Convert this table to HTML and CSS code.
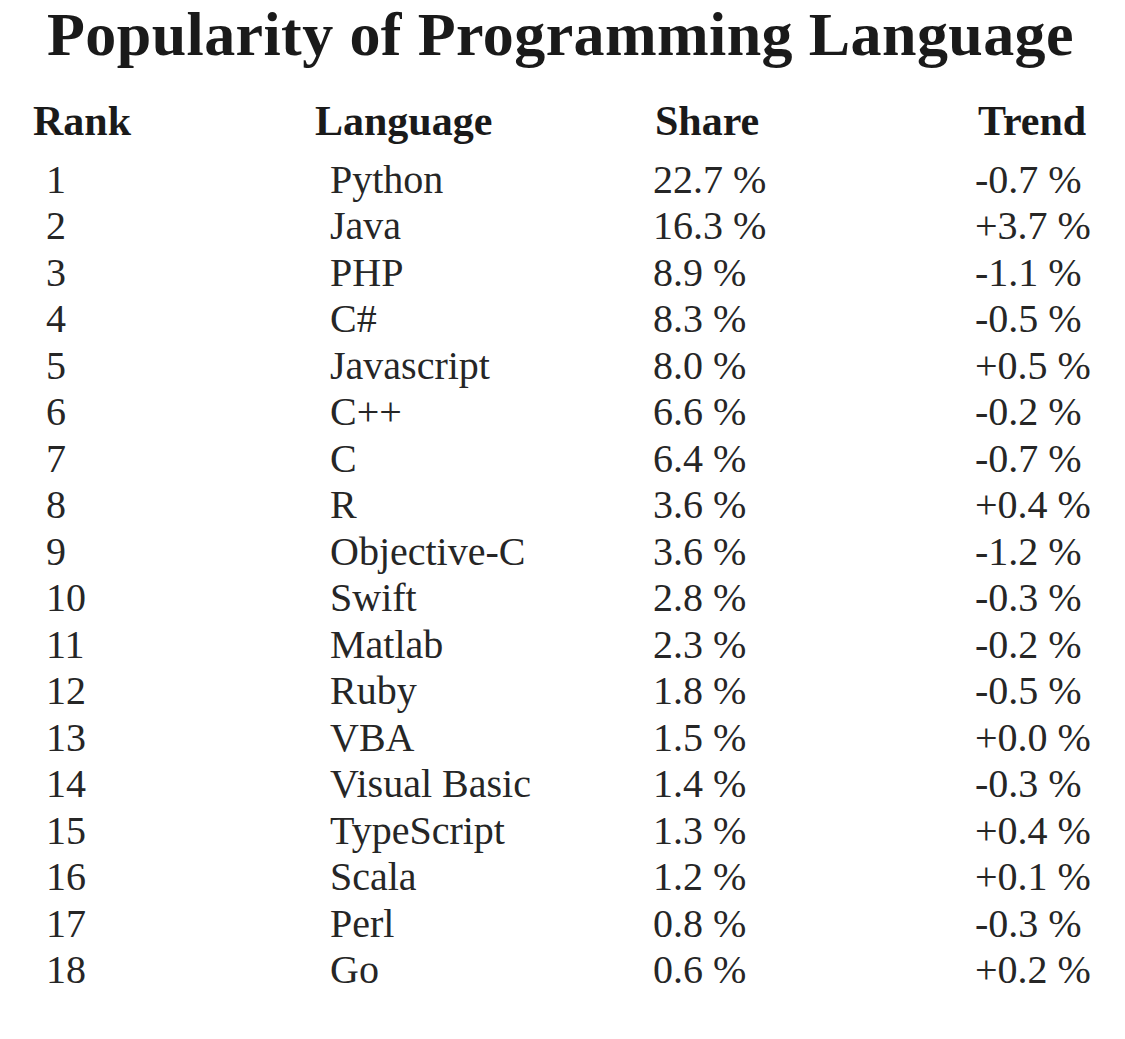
FILE: index.html
```html
<!DOCTYPE html>
<html lang="en">
<head>
<meta charset="utf-8">
<title>Popularity of Programming Language</title>
<link rel="stylesheet" href="styles.css">
</head>
<body>
<main class="page">
  <h1 class="title">Popularity of Programming Language</h1>
  <div class="table">
    <div class="head rank">Rank</div>
    <div class="head lang">Language</div>
    <div class="head share">Share</div>
    <div class="head trend">Trend</div>

    <div class="cell rank">1</div><div class="cell lang">Python</div><div class="cell share">22.7 %</div><div class="cell trend">-0.7 %</div>
    <div class="cell rank">2</div><div class="cell lang">Java</div><div class="cell share">16.3 %</div><div class="cell trend">+3.7 %</div>
    <div class="cell rank">3</div><div class="cell lang">PHP</div><div class="cell share">8.9 %</div><div class="cell trend">-1.1 %</div>
    <div class="cell rank">4</div><div class="cell lang">C#</div><div class="cell share">8.3 %</div><div class="cell trend">-0.5 %</div>
    <div class="cell rank">5</div><div class="cell lang">Javascript</div><div class="cell share">8.0 %</div><div class="cell trend">+0.5 %</div>
    <div class="cell rank">6</div><div class="cell lang">C++</div><div class="cell share">6.6 %</div><div class="cell trend">-0.2 %</div>
    <div class="cell rank">7</div><div class="cell lang">C</div><div class="cell share">6.4 %</div><div class="cell trend">-0.7 %</div>
    <div class="cell rank">8</div><div class="cell lang">R</div><div class="cell share">3.6 %</div><div class="cell trend">+0.4 %</div>
    <div class="cell rank">9</div><div class="cell lang">Objective-C</div><div class="cell share">3.6 %</div><div class="cell trend">-1.2 %</div>
    <div class="cell rank">10</div><div class="cell lang">Swift</div><div class="cell share">2.8 %</div><div class="cell trend">-0.3 %</div>
    <div class="cell rank">11</div><div class="cell lang">Matlab</div><div class="cell share">2.3 %</div><div class="cell trend">-0.2 %</div>
    <div class="cell rank">12</div><div class="cell lang">Ruby</div><div class="cell share">1.8 %</div><div class="cell trend">-0.5 %</div>
    <div class="cell rank">13</div><div class="cell lang">VBA</div><div class="cell share">1.5 %</div><div class="cell trend">+0.0 %</div>
    <div class="cell rank">14</div><div class="cell lang">Visual Basic</div><div class="cell share">1.4 %</div><div class="cell trend">-0.3 %</div>
    <div class="cell rank">15</div><div class="cell lang">TypeScript</div><div class="cell share">1.3 %</div><div class="cell trend">+0.4 %</div>
    <div class="cell rank">16</div><div class="cell lang">Scala</div><div class="cell share">1.2 %</div><div class="cell trend">+0.1 %</div>
    <div class="cell rank">17</div><div class="cell lang">Perl</div><div class="cell share">0.8 %</div><div class="cell trend">-0.3 %</div>
    <div class="cell rank">18</div><div class="cell lang">Go</div><div class="cell share">0.6 %</div><div class="cell trend">+0.2 %</div>
  </div>
</main>
</body>
</html>
```

FILE: styles.css
```css
html, body {
  margin: 0;
  padding: 0;
  background: #ffffff;
}

body {
  font-family: "Liberation Serif", "Times New Roman", serif;
  color: #1f1f1f;
}

.page {
  width: 1125px;
  height: 1039px;
  overflow: hidden;
}

.title {
  margin: 0;
  font-size: 62px;
  line-height: 68px;
  font-weight: 700;
  letter-spacing: 0.4px;
  text-align: center;
  color: #1a1a1a;
  padding-right: 4px;
}

.table {
  display: grid;
  grid-template-columns: 282px 340px 323px 1fr;
  margin-top: 30px;
  padding-left: 33px;
}

.head {
  font-size: 42px;
  line-height: 46.5px;
  font-weight: 700;
  color: #1a1a1a;
  margin-bottom: 12px;
}

.cell {
  font-size: 40px;
  line-height: 46.5px;
  color: #262626;
}

.cell.rank { padding-left: 13px; }
.cell.lang { padding-left: 15px; }
.cell.share { margin-left: -2px; }
.cell.trend { margin-left: -3px; }
```
